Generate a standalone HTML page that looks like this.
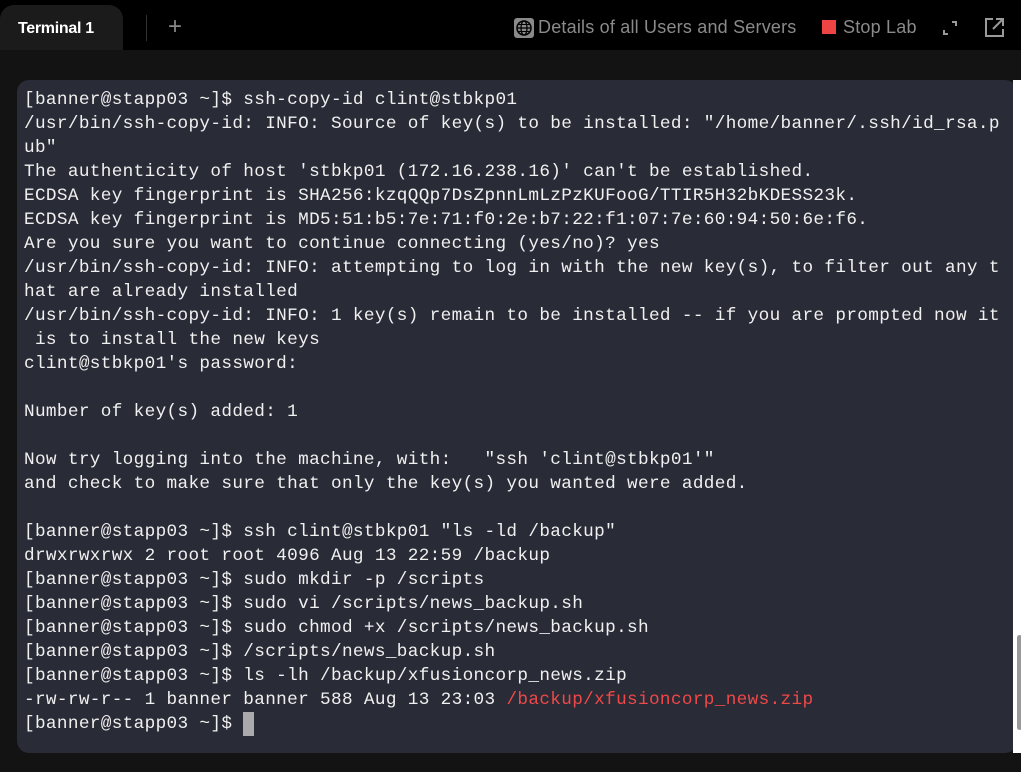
<!DOCTYPE html>
<html><head><meta charset="utf-8">
<style>
*{margin:0;padding:0;box-sizing:border-box}
html,body{width:1021px;height:772px;overflow:hidden;background:#131313;font-family:"Liberation Sans",sans-serif}
#top{position:absolute;left:0;top:0;width:1021px;height:50px;background:#000}
#tab{position:absolute;left:0;top:5px;width:123px;height:45px;background:#1b1b1b;border-radius:14px 14px 0 0;color:#fff;font-weight:bold;font-size:16px;line-height:47px;padding-left:18px;letter-spacing:-0.3px}
#sep{position:absolute;left:146px;top:15px;width:1px;height:26px;background:#333}
#plus{position:absolute;left:168px;top:13px;color:#888;font-size:24px;font-weight:300}
.tr{position:absolute;top:17px;color:#8a8a8a;font-size:18px;letter-spacing:0.2px}
#panel{position:absolute;left:17px;top:80px;width:1000px;height:673px;background:#292b36;border-radius:12px}
#sb{position:absolute;left:1013px;top:80px;width:8px;height:673px;background:#fff}
#thumb{position:absolute;left:1017px;top:635px;width:5px;height:95px;background:#999;border-radius:3px}
pre{position:absolute;left:24px;top:88px;font-family:"Liberation Mono","DejaVu Sans Mono",monospace;font-size:17.7px;letter-spacing:0.35px;line-height:24px;color:#f0f0f0;white-space:pre}
.r{color:#f04848}
.cur{display:inline-block;width:11px;height:24px;background:#aaa;vertical-align:top}
</style></head><body>
<div id="top"></div>
<div id="tab">Terminal 1</div>
<div id="sep"></div>
<div id="plus">+</div>
<svg style="position:absolute;left:514px;top:18px" width="20" height="20" viewBox="0 0 20 20"><rect x="0" y="0" width="20" height="20" rx="3" fill="#8a8a8a"/><circle cx="10" cy="10" r="7" fill="none" stroke="#000" stroke-width="1.5"/><ellipse cx="10" cy="10" rx="3" ry="7" fill="none" stroke="#000" stroke-width="1.3"/><line x1="3" y1="10" x2="17" y2="10" stroke="#000" stroke-width="1.3"/><line x1="4" y1="6.5" x2="16" y2="6.5" stroke="#000" stroke-width="1"/><line x1="4" y1="13.5" x2="16" y2="13.5" stroke="#000" stroke-width="1"/></svg>
<div class="tr" style="left:538px">Details of all Users and Servers</div>
<div style="position:absolute;left:822px;top:20px;width:14px;height:14px;background:#ef4444"></div>
<div class="tr" style="left:843px">Stop Lab</div>
<svg style="position:absolute;left:942px;top:20px" width="16" height="16" viewBox="0 0 16 16"><path d="M10 2h4v4M6 14H2v-4" fill="none" stroke="#9a9a9a" stroke-width="2"/></svg>
<svg style="position:absolute;left:984px;top:17px" width="21" height="21" viewBox="0 0 21 21"><path d="M9 2H2v17h17v-7M12 2h7v7M19 2L9 12" fill="none" stroke="#9a9a9a" stroke-width="2"/></svg>
<div id="panel"></div>
<div id="sb"></div><div id="thumb"></div>
<pre>[banner@stapp03 ~]$ ssh-copy-id clint@stbkp01
/usr/bin/ssh-copy-id: INFO: Source of key(s) to be installed: "/home/banner/.ssh/id_rsa.p
ub"
The authenticity of host 'stbkp01 (172.16.238.16)' can't be established.
ECDSA key fingerprint is SHA256:kzqQQp7DsZpnnLmLzPzKUFooG/TTIR5H32bKDESS23k.
ECDSA key fingerprint is MD5:51:b5:7e:71:f0:2e:b7:22:f1:07:7e:60:94:50:6e:f6.
Are you sure you want to continue connecting (yes/no)? yes
/usr/bin/ssh-copy-id: INFO: attempting to log in with the new key(s), to filter out any t
hat are already installed
/usr/bin/ssh-copy-id: INFO: 1 key(s) remain to be installed -- if you are prompted now it
 is to install the new keys
clint@stbkp01's password:

Number of key(s) added: 1

Now try logging into the machine, with:   "ssh 'clint@stbkp01'"
and check to make sure that only the key(s) you wanted were added.

[banner@stapp03 ~]$ ssh clint@stbkp01 "ls -ld /backup"
drwxrwxrwx 2 root root 4096 Aug 13 22:59 /backup
[banner@stapp03 ~]$ sudo mkdir -p /scripts
[banner@stapp03 ~]$ sudo vi /scripts/news_backup.sh
[banner@stapp03 ~]$ sudo chmod +x /scripts/news_backup.sh
[banner@stapp03 ~]$ /scripts/news_backup.sh
[banner@stapp03 ~]$ ls -lh /backup/xfusioncorp_news.zip
-rw-rw-r-- 1 banner banner 588 Aug 13 23:03 <span class="r">/backup/xfusioncorp_news.zip</span>
[banner@stapp03 ~]$ <span class="cur"></span></pre>
</body></html>
